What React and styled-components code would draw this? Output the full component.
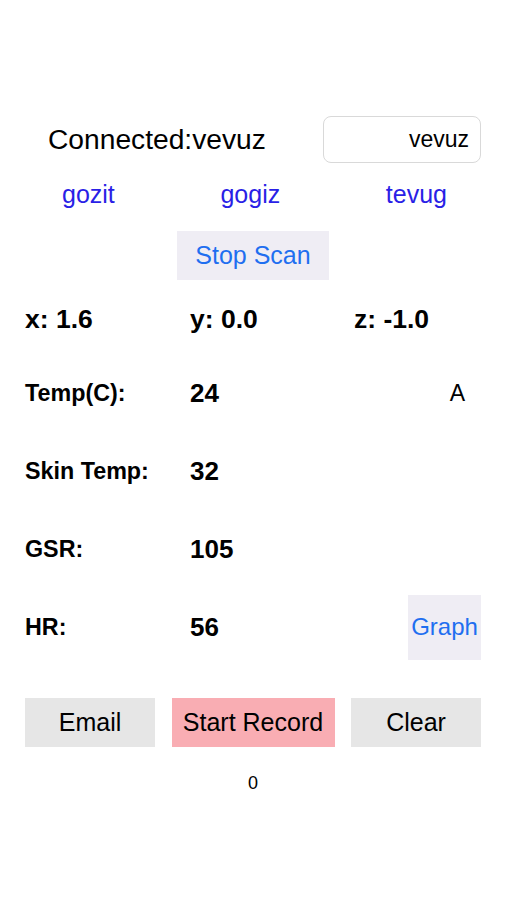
import React from "react";
import styled, { createGlobalStyle } from "styled-components";

const GlobalStyle = createGlobalStyle`
  body {
    margin: 0;
    background: #ffffff;
    font-family: "Liberation Sans", Arial, sans-serif;
    color: #000000;
  }
`;

const Screen = styled.div`
  width: 507px;
  height: 900px;
  box-sizing: border-box;
  padding: 116px 26px 0 25px;
  display: flex;
  flex-direction: column;
`;

const Header = styled.div`
  height: 47px;
  display: flex;
  align-items: center;
  justify-content: space-between;
`;

const Status = styled.div`
  padding-left: 23px;
  font-size: 28.2px;
`;

const NameField = styled.div`
  width: 158px;
  height: 47px;
  box-sizing: border-box;
  border: 1px solid #d9d9d9;
  border-radius: 8px;
  display: flex;
  align-items: center;
  justify-content: flex-end;
  padding-right: 11px;
  font-size: 23px;
`;

const Devices = styled.div`
  margin-top: 16px;
  height: 30px;
  display: flex;
  align-items: center;
  justify-content: space-between;
  padding: 0 34px 0 37px;
`;

const DeviceLink = styled.span`
  font-size: 25px;
  color: #2a1fe6;
`;

const ScanRow = styled.div`
  margin-top: 22px;
  display: flex;
  justify-content: center;
`;

const TintButton = styled.button`
  border: none;
  margin: 0;
  padding: 0;
  width: ${(p) => p.$w}px;
  height: ${(p) => p.$h}px;
  background: #efedf4;
  color: #1f6ff0;
  font-family: inherit;
  font-size: ${(p) => p.$size || 24}px;
  display: flex;
  align-items: center;
  justify-content: center;
`;

const AxisRow = styled.div`
  margin-top: 19px;
  height: 40px;
  display: grid;
  grid-template-columns: 165px 164px 1fr;
  align-items: center;
  font-size: 26.5px;
  font-weight: bold;
`;

const Readings = styled.div`
  margin-top: 15px;
  display: flex;
  flex-direction: column;
`;

const ReadingRow = styled.div`
  height: 78px;
  display: grid;
  grid-template-columns: 165px 1fr auto;
  align-items: center;
`;

const Label = styled.span`
  font-size: 23.3px;
  font-weight: bold;
`;

const Value = styled.span`
  font-size: 26px;
  font-weight: bold;
`;

const Aside = styled.span`
  font-size: 23px;
  padding-right: 16px;
`;

const Actions = styled.div`
  margin-top: 32px;
  display: grid;
  grid-template-columns: 130px 163px 130px;
  justify-content: space-between;
`;

const ActionButton = styled.button`
  border: none;
  margin: 0;
  padding: 0;
  height: 49px;
  background: ${(p) => (p.$alert ? "#f9adb3" : "#e6e6e6")};
  color: #000000;
  font-family: inherit;
  font-size: 25px;
`;

const Counter = styled.div`
  margin-top: 26px;
  height: 20px;
  text-align: center;
  font-size: 18px;
  line-height: 20px;
`;

const readings = [
  { label: "Temp(C):", value: "24", aside: "A" },
  { label: "Skin Temp:", value: "32" },
  { label: "GSR:", value: "105" },
  { label: "HR:", value: "56", graph: true },
];

export default function App() {
  return (
    <>
      <GlobalStyle />
      <Screen>
        <Header>
          <Status>Connected:vevuz</Status>
          <NameField>vevuz</NameField>
        </Header>
        <Devices>
          <DeviceLink>gozit</DeviceLink>
          <DeviceLink>gogiz</DeviceLink>
          <DeviceLink>tevug</DeviceLink>
        </Devices>
        <ScanRow>
          <TintButton $w={152} $h={49} $size={25}>Stop Scan</TintButton>
        </ScanRow>
        <AxisRow>
          <span>x: 1.6</span>
          <span>y: 0.0</span>
          <span>z: -1.0</span>
        </AxisRow>
        <Readings>
          {readings.map((r) => (
            <ReadingRow key={r.label}>
              <Label>{r.label}</Label>
              <Value>{r.value}</Value>
              {r.graph ? (
                <TintButton $w={73} $h={65}>Graph</TintButton>
              ) : (
                <Aside>{r.aside || ""}</Aside>
              )}
            </ReadingRow>
          ))}
        </Readings>
        <Actions>
          <ActionButton>Email</ActionButton>
          <ActionButton $alert>Start Record</ActionButton>
          <ActionButton>Clear</ActionButton>
        </Actions>
        <Counter>0</Counter>
      </Screen>
    </>
  );
}
